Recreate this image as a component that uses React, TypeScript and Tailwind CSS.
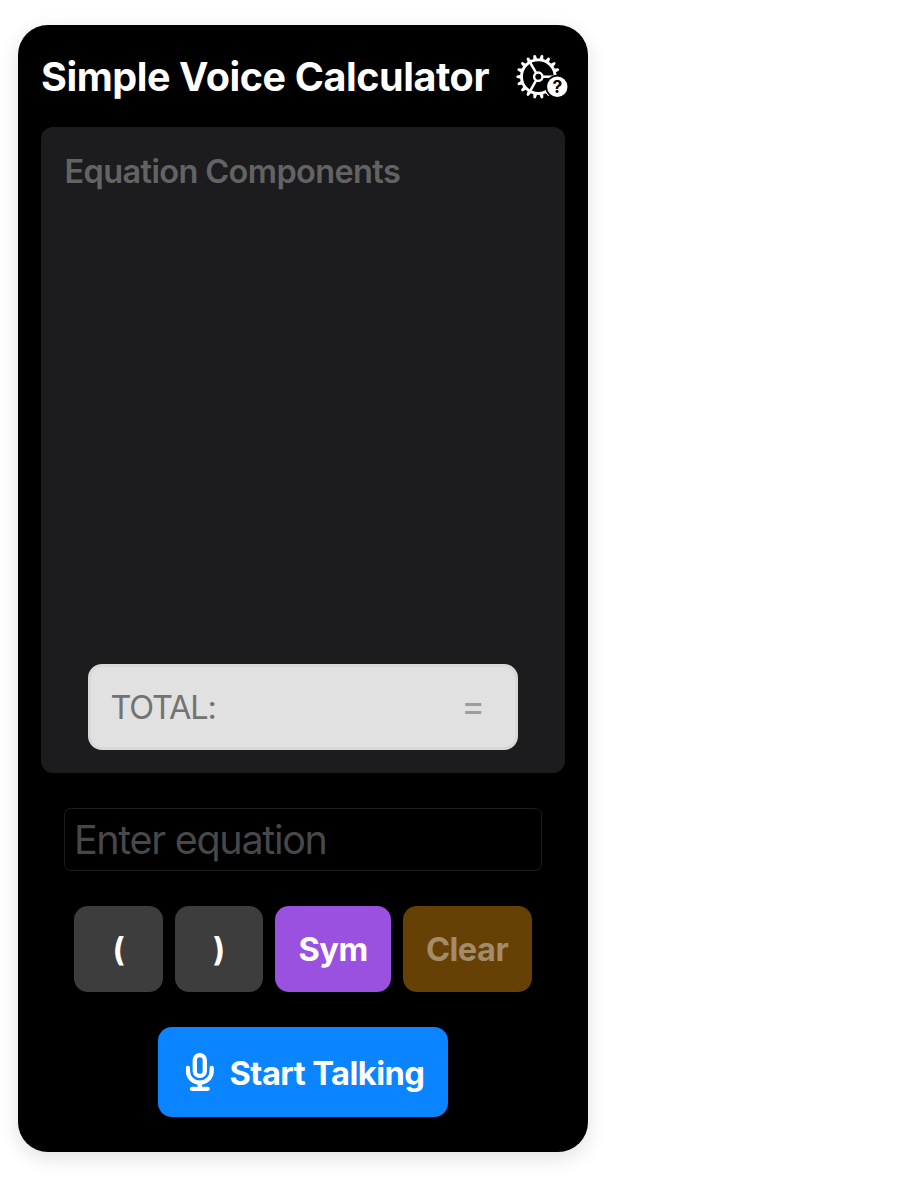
const TEETH = Array.from({ length: 18 }, (_, i) => 10 + i * 20);

function GearHelpIcon() {
  return (
    <svg className="block h-[48px] w-[54px]" viewBox="0 0 54 48" fill="none" aria-hidden="true">
      <g transform="translate(23.3 23.7)">
        {TEETH.map((a) => (
          <path
            key={a}
            d="M-2 -17.5L-1.3 -21.1Q-1.1 -22 0 -22Q1.1 -22 1.3 -21.1L2 -17.5Z"
            fill="#fff"
            transform={`rotate(${a})`}
          />
        ))}
        <circle r="16.8" stroke="#fff" strokeWidth="2.9" />
        <circle r="4.2" stroke="#fff" strokeWidth="2.4" />
        {[0, 120, 240].map((a) => (
          <path key={a} d="M4.6 0H16" stroke="#fff" strokeWidth="2.5" transform={`rotate(${a})`} />
        ))}
      </g>
      <circle cx="42.3" cy="33.8" r="12" fill="#000" />
      <circle cx="42.3" cy="33.8" r="10.2" fill="#fff" />
      <text x="42.3" y="40" textAnchor="middle" className="font-['Inter',sans-serif] text-[17.5px] font-bold" fill="#000">
        ?
      </text>
    </svg>
  );
}

function MicIcon() {
  return (
    <svg className="block h-[38px] w-[28px] shrink-0" viewBox="0 0 28 38" fill="none" stroke="#fff" strokeWidth="4.3" strokeLinecap="round" aria-hidden="true">
      <rect x="8.8" y="2.1" width="10" height="20.8" rx="5" />
      <path d="M1.9 15V18A11.9 11.6 0 0 0 25.7 18V15" />
      <path d="M13.8 30V35.5M5.9 35.8H21.7" />
    </svg>
  );
}

export default function App() {
  return (
    <div className="h-[1179px] w-full bg-white pt-[25px] pl-[18px] font-['Inter',sans-serif]">
      <main className="flex h-[1127px] w-[569.6px] flex-col items-center rounded-[30px] bg-black px-[23px] shadow-[0_6px_20px_rgba(0,0,0,0.12)]">
        <header className="flex h-[102px] w-full items-center justify-between pt-[2px]">
          <h1 className="text-[39.5px] leading-[48px] font-bold tracking-[-0.43px] whitespace-nowrap text-white">Simple Voice Calculator</h1>
          <button className="-mr-[4.4px] shrink-0" aria-label="Settings and help">
            <GearHelpIcon />
          </button>
        </header>

        <section className="flex h-[646px] w-full flex-col justify-between rounded-[12px] bg-[#1c1c1e] px-[23.5px] pt-[24px] pb-[23px]">
          <h2 className="text-[32.5px] leading-[42px] font-semibold tracking-[-0.62px] whitespace-nowrap text-[#636363]">Equation Components</h2>
          <div className="mx-[23px] flex h-[86.5px] items-center justify-between rounded-[14px] border-[3px] border-[#d8d8d9] bg-[#e1e1e1] pr-[30px] pl-[20px] text-[32.5px] leading-[42px]">
            <span className="mt-[2px] tracking-[-1.2px] text-[#737373]">TOTAL:</span>
            <span className="-mt-[1px] text-[36px] text-[#9c9c9c]">=</span>
          </div>
        </section>

        <input
          className="mt-[35px] block h-[63px] w-[477.8px] rounded-[7px] border border-[#1d1d1f] bg-black px-[9px] text-[39.5px] tracking-[-1.3px] text-white outline-none placeholder:text-[#48484a]"
          placeholder="Enter equation"
        />

        <div className="mt-[35px] flex h-[86.4px] gap-[11.7px] text-[32.6px] font-bold tracking-[-0.5px] text-white">
          <button className="w-[88.8px] rounded-[14px] bg-[#3d3d3d]">(</button>
          <button className="w-[88.8px] rounded-[14px] bg-[#3d3d3d]">)</button>
          <button className="w-[116px] rounded-[14px] bg-[#9b51e0]">Sym</button>
          <button className="w-[128.8px] rounded-[14px] bg-[#664005] text-[#a38c69]">Clear</button>
        </div>

        <button className="mt-[34.6px] flex h-[90px] w-[290.6px] items-center rounded-[14px] bg-[#0a84ff] pl-[28px] text-[32.7px] font-bold tracking-[-0.57px] whitespace-nowrap text-white">
          <MicIcon />
          <span className="mt-[3px] ml-[16px]">Start Talking</span>
        </button>
      </main>
    </div>
  );
}
